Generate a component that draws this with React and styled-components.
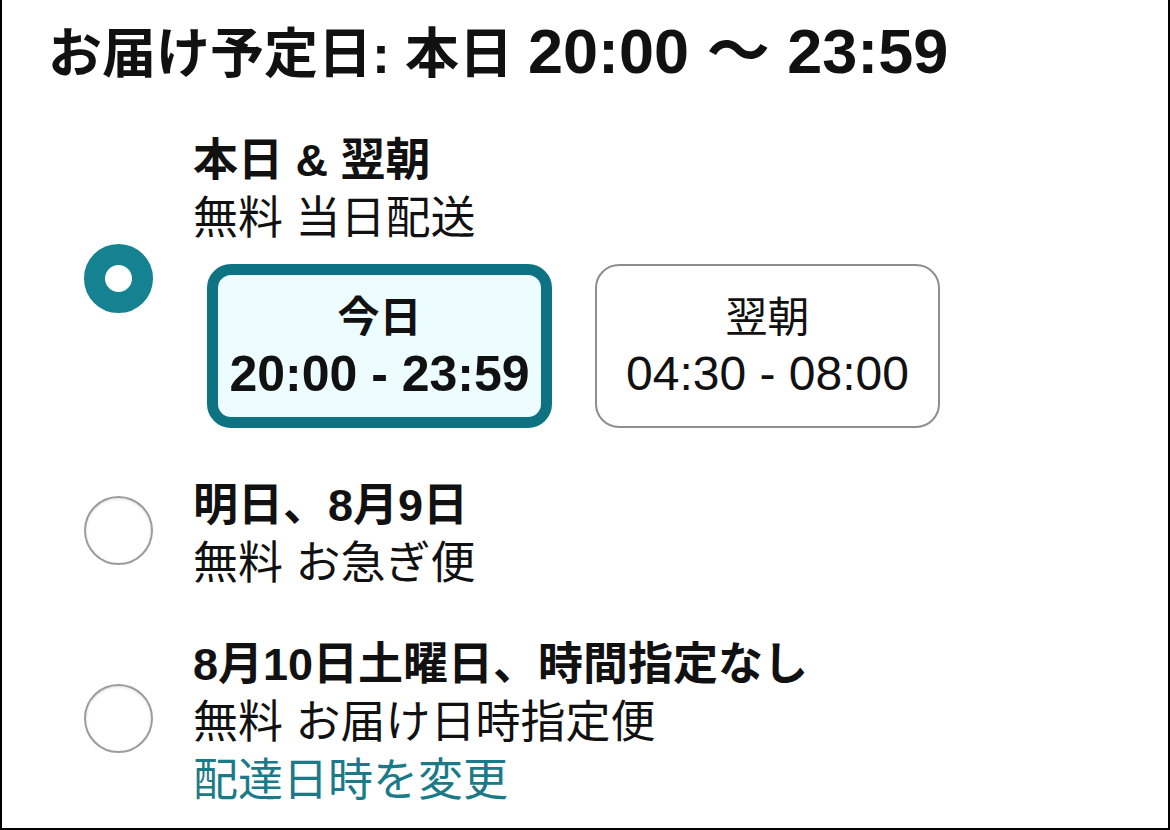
import React from 'react';
import styled, { createGlobalStyle } from 'styled-components';

const GlobalStyle = createGlobalStyle`
    html, body {
        margin: 0;
        padding: 0;
        background: #fff;
    }
    body {
        font-family: "Liberation Sans", "Noto Sans CJK JP", sans-serif;
        color: #111;
    }
`;

const Page = styled.div`
    box-sizing: border-box;
    width: 1170px;
    height: 830px;
    padding: 16px 0 0 46px;
    border: 2px solid #000;
    border-top: none;
    overflow: hidden;
`;

const Heading = styled.h1`
    margin: 0;
    font-size: 54px;
    line-height: 70px;
    font-weight: 700;
    white-space: nowrap;
`;

const HeadingTime = styled.span`
    font-size: 63px;
`;

const OptionList = styled.div`
    display: flex;
    flex-direction: column;
    gap: 43px;
    margin: 43px 0 0 36px;
`;

const Option = styled.div`
    display: grid;
    grid-template-columns: 69px auto;
    column-gap: 40px;
    align-items: center;
`;

const Radio = styled.span`
    box-sizing: border-box;
    width: 69px;
    height: 69px;
    margin-bottom: 10px;
    border-radius: 50%;
    background: #fff;
    border: ${(p) => (p.checked ? '21.5px solid #158291' : '2px solid #9c9c9c')};
    box-shadow: ${(p) => (p.checked ? 'none' : 'inset 0 1px 3px rgba(0, 0, 0, 0.12)')};
`;

const OptionBody = styled.div`
    display: flex;
    flex-direction: column;
`;

const OptionTitle = styled.div`
    font-size: 45px;
    line-height: 58px;
    font-weight: 700;
    white-space: nowrap;
`;

const OptionText = styled.div`
    font-size: 45px;
    line-height: 58px;
    white-space: nowrap;
`;

const ChangeLink = styled.a`
    font-size: 45px;
    line-height: 58px;
    color: #1b7a88;
    text-decoration: none;
    cursor: pointer;
`;

const Slots = styled.div`
    display: flex;
    gap: 43px;
    margin: 16px 0 6px 14px;
`;

const Slot = styled.button`
    box-sizing: border-box;
    width: 345px;
    height: 164px;
    padding: 0;
    display: flex;
    flex-direction: column;
    align-items: center;
    justify-content: center;
    border-radius: 24px;
    font-family: inherit;
    color: #111;
    background: ${(p) => (p.selected ? '#edfcff' : '#fff')};
    border: ${(p) => (p.selected ? '11px solid #0d7282' : '2.5px solid #8e8e8e')};
    font-weight: ${(p) => (p.selected ? 700 : 400)};
`;

const SlotLabel = styled.span`
    font-size: 42px;
    line-height: 56px;
`;

const SlotTime = styled.span`
    font-size: ${(p) => (p.selected ? '50px' : '48px')};
    line-height: 56px;
    white-space: nowrap;
`;

const slots = [
    { label: '今日', time: '20:00 - 23:59', selected: true },
    { label: '翌朝', time: '04:30 - 08:00', selected: false },
];

export default function App() {
    return (
        <>
            <GlobalStyle />
            <Page>
                <Heading>
                    お届け予定日: 本日 <HeadingTime>20:00 〜 23:59</HeadingTime>
                </Heading>
                <OptionList>
                    <Option>
                        <Radio checked />
                        <OptionBody>
                            <OptionTitle>本日 &amp; 翌朝</OptionTitle>
                            <OptionText>無料 当日配送</OptionText>
                            <Slots>
                                {slots.map((s) => (
                                    <Slot key={s.label} selected={s.selected}>
                                        <SlotLabel>{s.label}</SlotLabel>
                                        <SlotTime selected={s.selected}>{s.time}</SlotTime>
                                    </Slot>
                                ))}
                            </Slots>
                        </OptionBody>
                    </Option>
                    <Option>
                        <Radio />
                        <OptionBody>
                            <OptionTitle>明日、8月9日</OptionTitle>
                            <OptionText>無料 お急ぎ便</OptionText>
                        </OptionBody>
                    </Option>
                    <Option>
                        <Radio />
                        <OptionBody>
                            <OptionTitle>8月10日土曜日、時間指定なし</OptionTitle>
                            <OptionText>無料 お届け日時指定便</OptionText>
                            <ChangeLink>配達日時を変更</ChangeLink>
                        </OptionBody>
                    </Option>
                </OptionList>
            </Page>
        </>
    );
}
